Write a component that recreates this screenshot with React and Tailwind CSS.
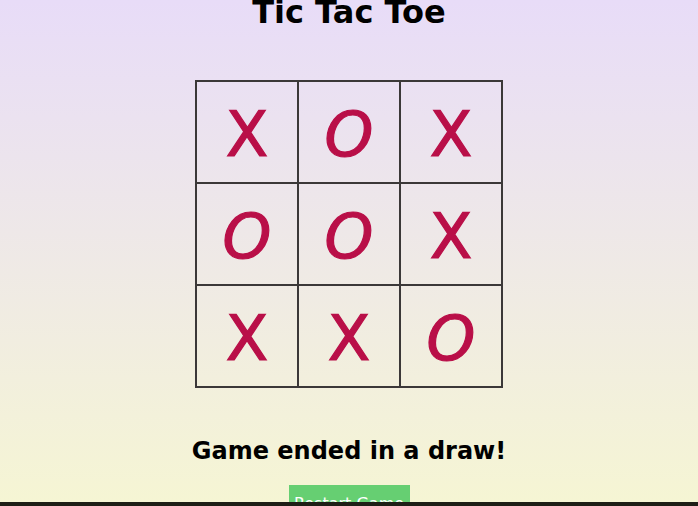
import React, { useState } from "react";

const initial = ["X", "O", "X", "O", "O", "X", "X", "X", "O"];

const App = () => {
  const [board, setBoard] = useState(initial);

  const restart = () => setBoard(Array(9).fill(null));

  return (
    <div
      className="min-h-[506px] bg-gradient-to-b from-[#e8dcf8] to-[#f6f6d2] flex flex-col items-center overflow-hidden"
      style={{ fontFamily: '"DejaVu Sans", Verdana, sans-serif' }}
    >
      <h1 className="text-[32px] font-bold leading-[38px] mt-[-7px] text-black">Tic Tac Toe</h1>

      <div className="mt-[49px] grid grid-cols-[repeat(3,102px)] border-l-2 border-t-2 border-[#3b3838]">
        {board.map((cell, i) => (
          <button
            key={i}
            className={`w-[102px] h-[102px] border-r-2 border-b-2 border-[#3b3838] flex items-center justify-center pt-[5px] text-[62px] leading-none text-[#b90f48] font-normal [-webkit-text-stroke:1.2px_#b90f48] ${
              cell === "O" ? "italic" : ""
            }`}
            style={{ fontFamily: '"DejaVu Sans", sans-serif' }}
          >
            {cell}
          </button>
        ))}
      </div>

      <h2 className="mt-[48px] text-[24px] font-bold leading-[30px] text-black">
        Game ended in a draw!
      </h2>

      <button
        onClick={restart}
        className="mt-[19px] w-[121px] h-[36px] bg-[#66cf72] text-white text-[16px] leading-none pt-[11px] flex justify-center items-start"
      >
        Restart Game
      </button>

      <div className="fixed left-0 right-0 bottom-0 h-[4px] bg-[#1e1e16]" />
    </div>
  );
};

export default App;
